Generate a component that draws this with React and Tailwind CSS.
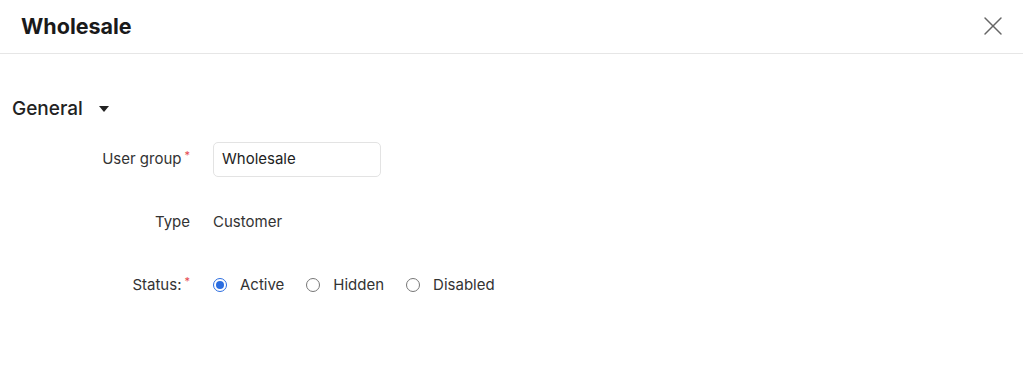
import { X } from "lucide-react";

function Label({ children, required }) {
  return (
    <div className="w-[190px] shrink-0 text-right text-[15px] text-[#333]">
      {children}
      {required && <span className="text-[#e5484d] text-[11px] align-top relative top-[-1px] ml-[3px]">*</span>}
    </div>
  );
}

function Radio({ label, checked }) {
  return (
    <label className="flex items-center gap-[13px] mr-[22px]">
      <span
        className={`flex h-[14px] w-[14px] items-center justify-center rounded-full border ${
          checked ? "border-[#2b6de0]" : "border-[#777]"
        } bg-white`}
      >
        {checked && <span className="h-[8px] w-[8px] rounded-full bg-[#2b6de0]" />}
      </span>
      <span className="text-[15px] text-[#333]">{label}</span>
    </label>
  );
}

export default function App() {
  return (
    <div className="h-[388px] w-full bg-white" style={{ fontFamily: "Inter, 'Noto Sans', sans-serif" }}>
      <div className="flex h-[54px] items-center justify-between border-b border-[#e6e6e6] pl-[21px] pr-[14px]">
        <h1 className="text-[21.5px] font-bold text-[#1a1a1a]">Wholesale</h1>
        <X size={32} strokeWidth={1.1} className="text-[#666] relative top-[-1px]" />
      </div>

      <div className="pl-[12px] pt-[41px]">
        <div className="flex items-center gap-[16px]">
          <h2 className="text-[19px] font-medium text-[#222]">General</h2>
          <span className="h-0 w-0 border-x-[5px] border-t-[6px] border-x-transparent border-t-[#222]" />
        </div>
      </div>

      <div className="mt-[18px] flex flex-col">
        <div className="flex items-center gap-[23px]">
          <Label required>User group</Label>
          <div className="flex h-[35px] w-[168px] items-center rounded-[5px] border border-[#e3e3e3] px-[8px] text-[15px] text-[#222]">
            Wholesale
          </div>
        </div>
        <div className="mt-[28px] flex h-[35px] items-center gap-[23px]">
          <Label>Type</Label>
          <div className="text-[15px] text-[#333]">Customer</div>
        </div>
        <div className="mt-[28px] flex h-[35px] items-center gap-[23px]">
          <Label required>Status:</Label>
          <div className="flex items-center">
            <Radio label="Active" checked />
            <Radio label="Hidden" />
            <Radio label="Disabled" />
          </div>
        </div>
      </div>
    </div>
  );
}
